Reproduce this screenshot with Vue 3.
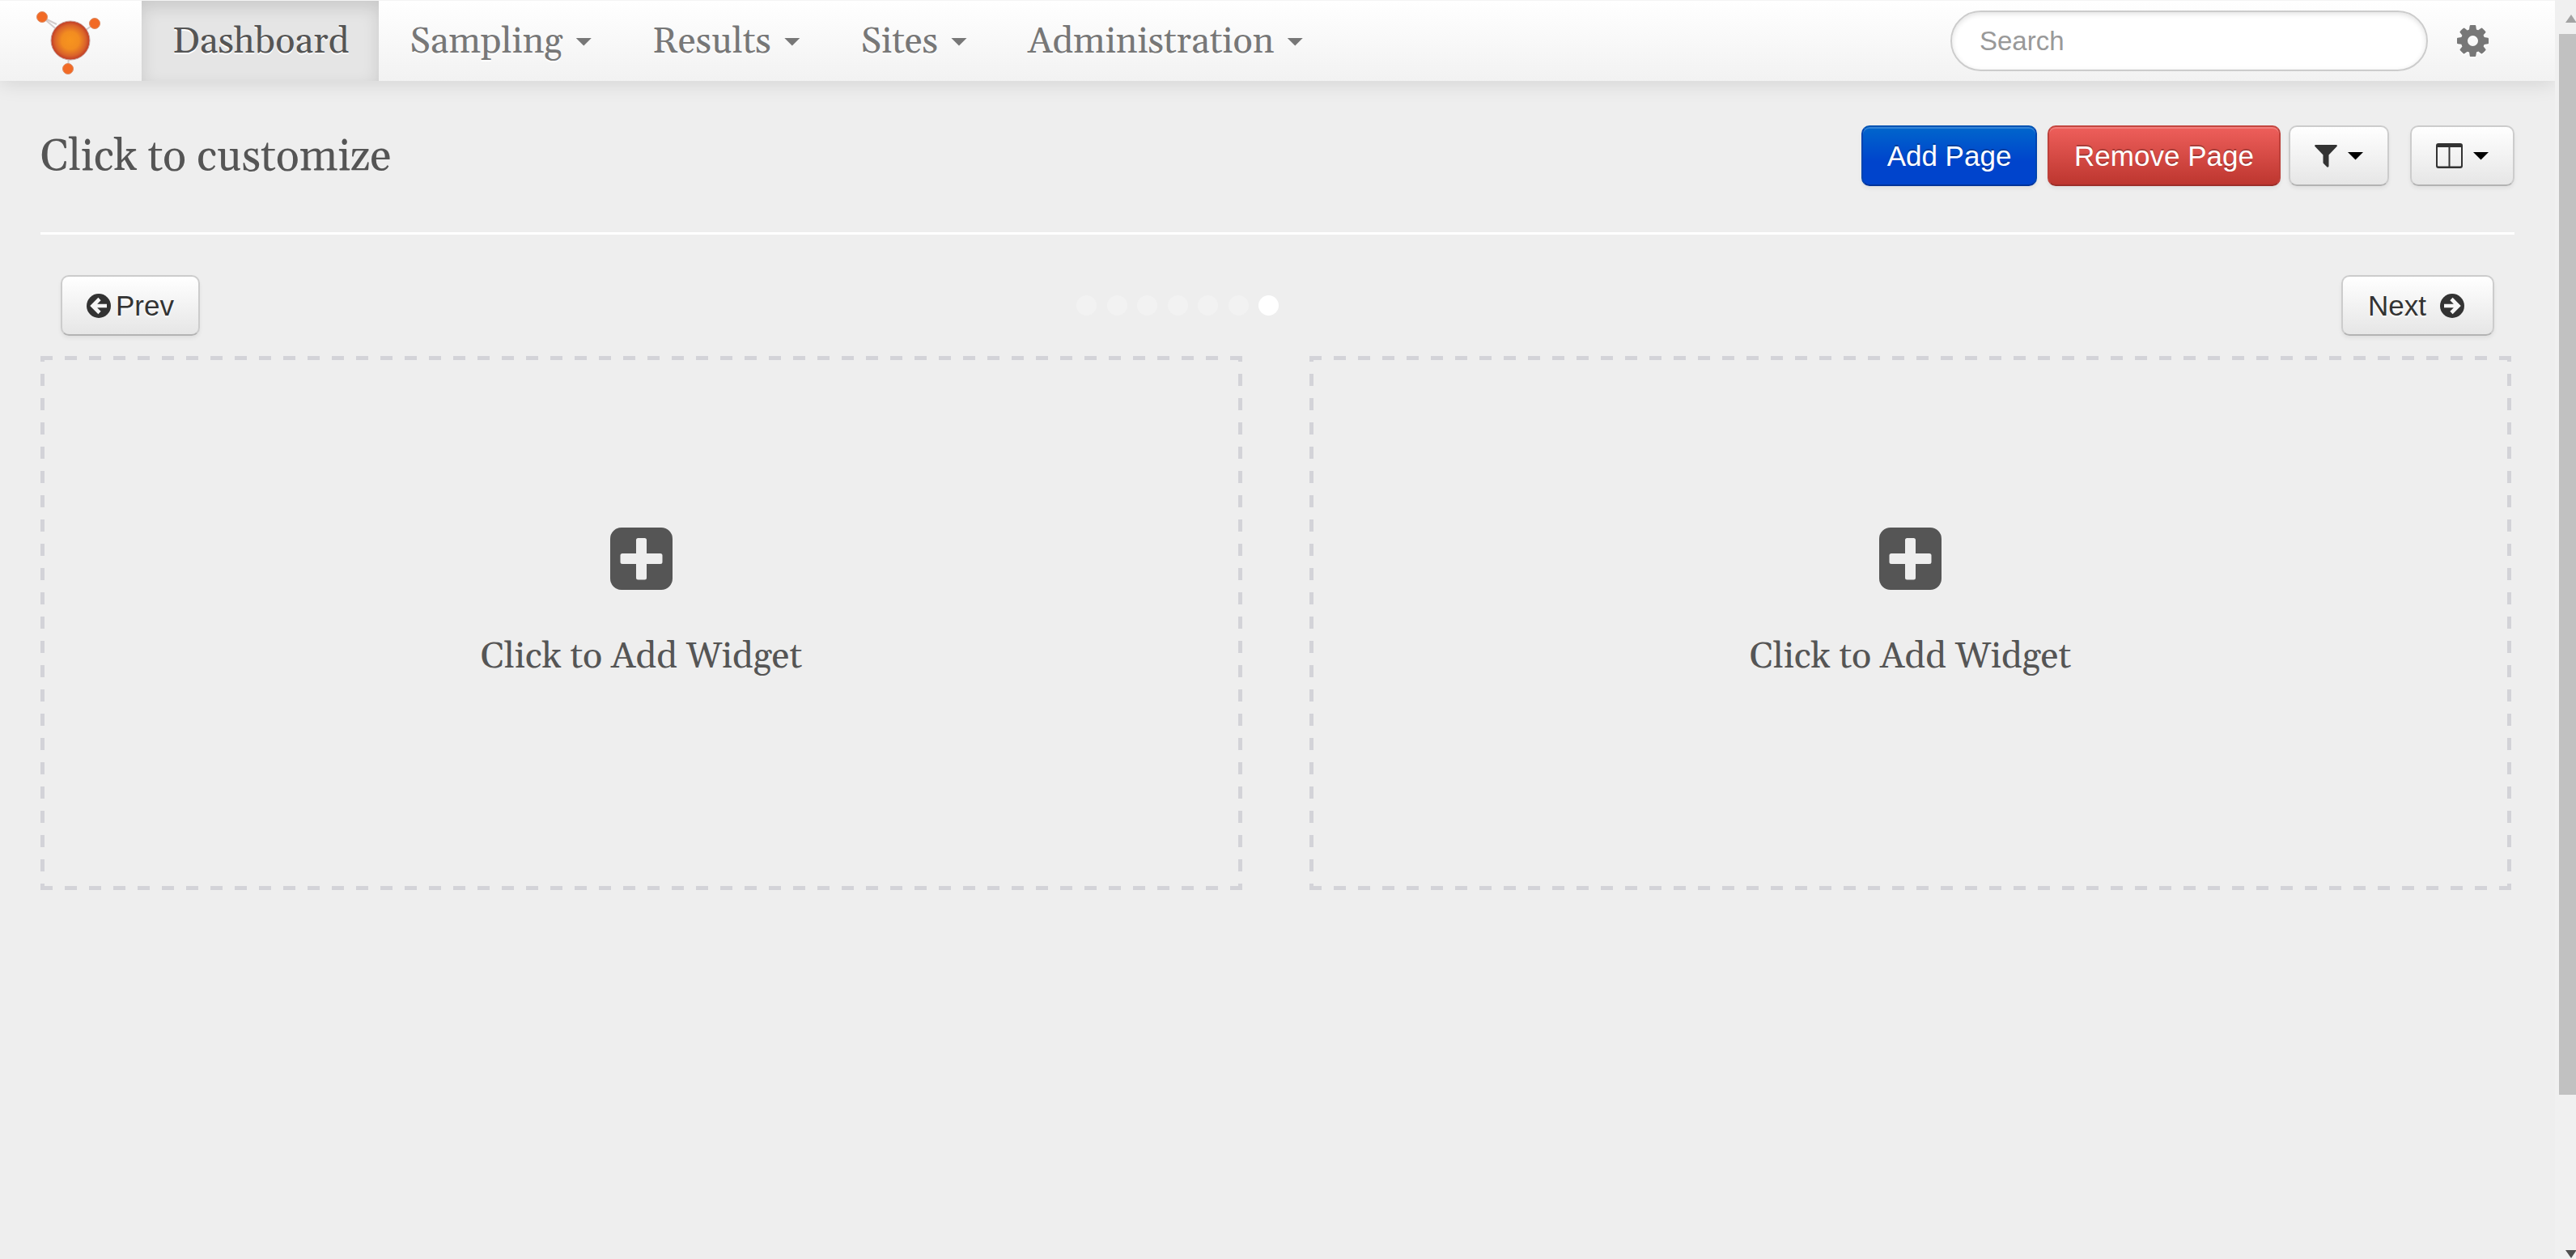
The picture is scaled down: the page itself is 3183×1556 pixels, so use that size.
<script setup>
import { ref } from 'vue'

const menus = ['Sampling', 'Results', 'Sites', 'Administration']
const pages = 7
const current = ref(7)
const widgets = [1, 2]
const query = ref('')
</script>

<template>
  <div class="screen">
    <div class="page">
      <header class="navbar">
        <a class="brand" href="#" aria-label="Home">
          <svg viewBox="0 0 82 82" width="82" height="82" aria-hidden="true">
            <defs>
              <radialGradient id="core">
                <stop offset="0" stop-color="#f7941e" />
                <stop offset="0.45" stop-color="#f28c20" />
                <stop offset="0.8" stop-color="#d9622a" />
                <stop offset="1" stop-color="#bf3a26" />
              </radialGradient>
            </defs>
            <path d="M9 9 L44 39 M9 9 L27 18 M74 17 L44 39 M41 73 L43 40" stroke="#d3cccc" stroke-width="2" fill="none" />
            <circle cx="44" cy="38" r="24" fill="url(#core)" stroke="#c9a49c" stroke-width="1" />
            <g fill="#f26a25" stroke="#dd8a62" stroke-width="1">
              <circle cx="9" cy="9" r="6.5" />
              <circle cx="74" cy="17" r="6.5" />
              <circle cx="41" cy="73" r="6.5" />
            </g>
          </svg>
        </a>
        <nav class="menu">
          <a class="item active" href="#">Dashboard</a>
          <a v-for="m in menus" :key="m" class="item" href="#">{{ m }}<i class="caret"></i></a>
        </nav>
        <input v-model="query" class="search" type="search" placeholder="Search" aria-label="Search" />
        <a class="gear" href="#" aria-label="Settings">
          <svg viewBox="0 0 1536 1536" width="39" height="39" aria-hidden="true">
            <path fill="#777" d="M1024 768q0-106-75-181t-181-75-181 75-75 181 75 181 181 75 181-75 75-181zm512-109v222q0 12-8 23t-20 13l-185 28q-19 54-39 91 35 50 107 138 10 12 10 25t-9 23q-27 37-99 108t-94 71q-12 0-26-9l-138-108q-44 23-91 38-16 136-29 186-7 28-36 28h-222q-14 0-24.500-8.500t-11.500-21.500l-28-184q-49-16-90-37l-141 107q-10 9-25 9-14 0-25-11-126-114-165-168-7-10-7-23 0-12 8-23 15-21 51-66.500t54-70.500q-27-50-41-99l-183-27q-13-2-21-12.500t-8-23.500v-222q0-12 8-23t19-13l186-28q14-46 39-92-40-57-107-138-10-12-10-24 0-10 9-23 26-36 98.500-107.500t94.500-71.500q13 0 26 10l138 107q44-23 91-38 16-136 29-186 7-28 36-28h222q14 0 24.500 8.500t11.500 21.500l28 184q49 16 90 37l142-107q9-9 24-9 13 0 25 10 129 119 165 170 7 8 7 22 0 12-8 23-15 21-51 66.500t-54 70.500q26 50 41 98l183 28q13 2 21 12.500t8 23.500z" />
          </svg>
        </a>
      </header>

      <main class="content">
        <div class="heading">
          <h1>Click to customize</h1>
          <div class="actions">
            <button class="btn primary" type="button">Add Page</button>
            <button class="btn danger" type="button">Remove Page</button>
            <button class="btn drop filter" type="button" aria-label="Filter">
              <svg viewBox="0 0 28 28" width="28" height="28" aria-hidden="true">
                <path fill="#333" d="M1 0H27Q28.500 0.500 27.500 2L17.500 12.500V26.500Q17 28 15.500 27.500L11 23Q10.500 22.500 10.500 21.500V12.500L0.500 2Q-0.500 0.500 1 0Z" />
              </svg>
              <i class="caret"></i>
            </button>
            <button class="btn drop columns" type="button" aria-label="Layout">
              <svg viewBox="0 0 33 31" width="33" height="31" aria-hidden="true">
                <path fill="#333" fill-rule="evenodd" d="M3 0H30Q33 0 33 3V28Q33 31 30 31H3Q0 31 0 28V3Q0 0 3 0ZM2 5V27.500Q2 28.500 3 28.500H15.500V5ZM17.500 5V28.500H30Q31 28.500 31 27.500V5Z" />
              </svg>
              <i class="caret"></i>
            </button>
          </div>
        </div>

        <div class="pager">
          <button class="btn prev" type="button">
            <svg viewBox="0 0 30 30" width="30" height="30" aria-hidden="true">
              <circle cx="15" cy="15" r="15" fill="#333" />
              <path d="M16 6.500 L7.500 15 L16 23.500 M8 15 H25" fill="none" stroke="#f6f6f6" stroke-width="4.600" />
            </svg>Prev
          </button>
          <div class="dots">
            <span v-for="p in pages" :key="p" class="dot" :class="{ on: p === current }"></span>
          </div>
          <button class="btn next" type="button">
            Next
            <svg viewBox="0 0 30 30" width="30" height="30" aria-hidden="true">
              <circle cx="15" cy="15" r="15" fill="#333" />
              <path d="M14 6.500 L22.500 15 L14 23.500 M22 15 H5" fill="none" stroke="#f6f6f6" stroke-width="4.600" />
            </svg>
          </button>
        </div>

        <div class="widgets">
          <button v-for="w in widgets" :key="w" class="widget" type="button">
            <svg viewBox="0 0 77 77" width="77" height="77" aria-hidden="true">
              <path fill="#555" fill-rule="evenodd" d="M14 0H63A14 14 0 0 1 77 14V63A14 14 0 0 1 63 77H14A14 14 0 0 1 0 63V14A14 14 0 0 1 14 0ZM34.500 13Q32 13 32 15.500V32H15Q12.500 32 12.500 34.500V42.500Q12.500 45 15 45H32V62Q32 64.500 34.500 64.500H42.500Q45 64.500 45 62V45H62Q64.500 45 64.500 42.500V34.500Q64.500 32 62 32H45V15.500Q45 13 42.500 13Z" />
            </svg>
            <span>Click to Add Widget</span>
          </button>
        </div>
      </main>
    </div>

    <div class="scrollbar" aria-hidden="true">
      <i class="arrow up"></i>
      <i class="thumb"></i>
      <i class="arrow down"></i>
    </div>
  </div>
</template>

<style>
body {
  background: #eee;
  overflow: hidden;
}
</style>

<style scoped>
* {
  box-sizing: border-box;
}

.screen {
  display: flex;
  height: 100vh;
  background: #eee;
  color: #555;
  font-family: Georgia, Gelasio, "Liberation Serif", serif;
}

.page {
  flex: 1;
  min-width: 0;
}

.navbar {
  display: flex;
  align-items: center;
  height: 100px;
  padding-right: 82px;
  border-top: 1px solid #f4f4f4;
  background: linear-gradient(#fff, #f2f2f2);
  box-shadow: 0 2px 25px rgba(0, 0, 0, 0.12);
}

.brand {
  width: 175px;
  padding: 4px 0 0 43px;
}

.brand svg {
  display: block;
}

.menu {
  display: flex;
  flex: 1;
  align-self: stretch;
}

.item {
  display: flex;
  align-items: center;
  gap: 16px;
  padding: 2px 37px 0 38px;
  color: #777;
  font-size: 45px;
  line-height: 60px;
  text-decoration: none;
  text-shadow: 0 2px 0 #fff;
}

.item.active {
  color: #555;
  background: #e5e5e5;
  box-shadow: inset 0 8px 20px rgba(0, 0, 0, 0.125);
}

.caret {
  width: 20px;
  height: 10px;
  background: currentColor;
  clip-path: polygon(0 0, 100% 0, 50% 100%);
}

.search {
  width: 590px;
  height: 75px;
  padding: 0 34px;
  border: 2px solid #ccc;
  border-radius: 38px;
  background: #fff;
  box-shadow: inset 0 2px 6px rgba(0, 0, 0, 0.12);
  color: #555;
  font-family: "Liberation Sans", Arial, sans-serif;
  font-size: 33px;
  appearance: none;
}

.search::placeholder {
  color: #999;
}

.gear {
  margin-left: 36px;
}

.gear svg {
  display: block;
  filter: drop-shadow(0 2px 0 #fff);
}

.content {
  padding: 55px 50px 0;
}

.heading {
  display: flex;
  justify-content: space-between;
  align-items: flex-start;
  height: 135px;
  border-bottom: 3px solid #fff;
}

h1 {
  margin: 0;
  font-size: 54px;
  font-weight: 400;
  line-height: 78px;
}

.actions {
  display: flex;
}

.btn {
  display: flex;
  align-items: center;
  justify-content: center;
  height: 75px;
  padding: 0;
  border: 2px solid #ccc;
  border-bottom-color: #b3b3b3;
  border-radius: 10px;
  background: linear-gradient(#fff, #e6e6e6);
  box-shadow: 0 3px 5px rgba(0, 0, 0, 0.06);
  color: #333;
  font-family: "Liberation Sans", Arial, sans-serif;
  font-size: 35px;
  line-height: 50px;
  text-shadow: 0 2px 2px #fff;
  white-space: nowrap;
}

.primary {
  width: 217px;
  border-color: #0052b3 #0044b0 #003399;
  background: linear-gradient(#0066cc, #0044cc 60%);
  box-shadow: inset 0 2px 0 rgba(255, 255, 255, 0.2), 0 3px 5px rgba(0, 0, 0, 0.06);
  color: #fff;
  text-shadow: 0 -2px 0 rgba(0, 0, 0, 0.25);
}

.danger {
  width: 288px;
  margin-left: 13px;
  border-color: #c4453f #bd403a #9c2f2a;
  background: linear-gradient(#ee5f5b, #bd362f);
  box-shadow: inset 0 2px 0 rgba(255, 255, 255, 0.2), 0 3px 5px rgba(0, 0, 0, 0.06);
  color: #fff;
  text-shadow: 0 -2px 0 rgba(0, 0, 0, 0.25);
}

.drop {
  gap: 13px;
  margin-left: 10px;
}

.drop .caret {
  color: #000;
}

.filter {
  width: 124px;
}

.columns {
  width: 129px;
  margin-left: 26px;
}

.pager {
  display: flex;
  justify-content: space-between;
  align-items: center;
  padding: 50px 25px 25px;
}

.prev {
  gap: 6px;
  width: 172px;
}

.next {
  gap: 17px;
  width: 189px;
  padding-right: 4px;
}

.dots {
  display: flex;
  justify-content: space-between;
  width: 250px;
  margin-right: 230px;
}

.dot {
  width: 25px;
  height: 25px;
  border-radius: 50%;
  background: #f2f2f2;
}

.dot.on {
  background: #fff;
}

.widgets {
  display: grid;
  grid-template-columns: 1fr 1fr;
  gap: 83px;
  margin-right: 4px;
}

.widget {
  --dash: #d3d3d8 0 15px, transparent 15px 30px;
  display: flex;
  flex-direction: column;
  align-items: center;
  gap: 53px;
  height: 660px;
  padding: 212px 0 0;
  border: 0;
  background:
    repeating-linear-gradient(90deg, var(--dash)) 0 0 / 100% 5px no-repeat,
    repeating-linear-gradient(90deg, var(--dash)) 0 100% / 100% 5px no-repeat,
    linear-gradient(#d3d3d8 0 15px, transparent 15px) 0 -8px / 5px 30px repeat-y,
    linear-gradient(#d3d3d8 0 15px, transparent 15px) 100% -8px / 5px 30px repeat-y;
  color: #555;
  font-family: inherit;
  font-size: 45px;
  line-height: 60px;
}

.scrollbar {
  display: flex;
  flex-direction: column;
  align-items: flex-end;
  width: 26px;
  background: #f0f0f0;
}

.thumb {
  width: 21px;
  height: 1311px;
  background: #c1c1c1;
}

.arrow {
  width: 13px;
  height: 10px;
}

.up {
  margin: 18px 0 14px;
  background: #a3a3a3;
  clip-path: polygon(0 100%, 7px 0, 100% 90%, 100% 100%);
}

.down {
  margin-top: auto;
  margin-bottom: 1px;
  background: #505050;
  clip-path: polygon(0 0, 100% 0, 100% 10%, 7px 100%);
}
</style>
